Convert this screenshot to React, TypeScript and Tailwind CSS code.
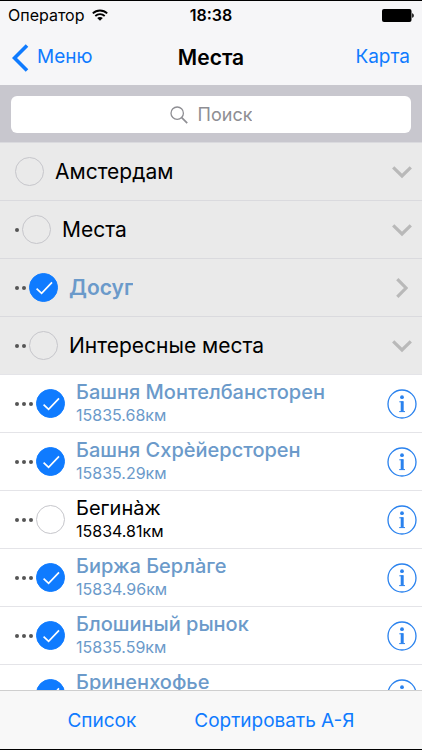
import { useState } from "react";

type Item = {
  id: string;
  title: string;
  level: number;
  checked: boolean;
};

type Group = Item & { open: boolean };
type Place = Item & { distance: string };

const GROUPS: Group[] = [
  { id: "amsterdam", title: "Амстердам", level: 0, checked: false, open: true },
  { id: "places", title: "Места", level: 1, checked: false, open: true },
  { id: "leisure", title: "Досуг", level: 2, checked: true, open: false },
  { id: "sights", title: "Интересные места", level: 2, checked: false, open: true },
];

const PLACES: Place[] = [
  { id: "montelbaan", title: "Башня Монтелбансторен", level: 3, checked: true, distance: "15835.68км" },
  { id: "schreiers", title: "Башня Схрѐйерсторен", level: 3, checked: true, distance: "15835.29км" },
  { id: "begijnhof", title: "Бегина̀ж", level: 3, checked: false, distance: "15834.81км" },
  { id: "beurs", title: "Биржа Берла̀ге", level: 3, checked: true, distance: "15834.96км" },
  { id: "flea", title: "Блошиный рынок", level: 3, checked: true, distance: "15835.59км" },
  { id: "brienen", title: "Бриненхофье", level: 3, checked: true, distance: "" },
];

function WifiIcon() {
  return (
    <svg viewBox="0 0 16 12" className="h-3 w-4" fill="none" stroke="currentColor" strokeWidth="1.8" aria-hidden="true">
      <path d="M0.8 4.4C4.8 0.5 11.2 0.5 15.2 4.4" />
      <path d="M3.3 7C6 4.5 10 4.5 12.7 7" />
      <path d="M8 11.8L5.2 9C6.8 7.6 9.2 7.6 10.8 9Z" fill="currentColor" stroke="none" />
    </svg>
  );
}

function BatteryIcon() {
  return (
    <svg viewBox="0 0 32 13" className="h-[13px] w-8" fill="currentColor" aria-hidden="true">
      <rect x="0" y="0" width="29.5" height="13" rx="2" />
      <path d="M30.2 4.2C32.3 4.9 32.3 8.1 30.2 8.8Z" />
    </svg>
  );
}

function Chevron({ open }: { open: boolean }) {
  return (
    <svg
      viewBox="0 0 20 20"
      className={`size-5 text-[#b9b9b9] ${open ? "" : "-rotate-90"}`}
      fill="none"
      stroke="currentColor"
      strokeWidth="3.2"
      aria-hidden="true"
    >
      <path d="M1.2 5.3L10 14L18.8 5.3" />
    </svg>
  );
}

function InfoIcon() {
  return (
    <svg viewBox="0 0 30 30" className="size-[30px]" fill="none" stroke="currentColor" aria-hidden="true">
      <circle cx="15" cy="15" r="14" strokeWidth="1.3" />
      <circle cx="15" cy="8.2" r="1.9" fill="currentColor" stroke="none" />
      <path d="M15.2 12.3V22.5" strokeWidth="3" />
      <path d="M12.3 12.8H16.2M12.2 22.6H18" strokeWidth="1" />
    </svg>
  );
}

function CheckRow({ item, checked, onToggle, distance }: {
  item: Item;
  checked: boolean;
  onToggle: () => void;
  distance?: string;
}) {
  const isPlace = distance !== undefined;
  const weight = isPlace ? "font-medium" : "font-semibold";

  return (
    <label className="flex min-w-0 flex-1 items-center">
      {Array.from({ length: item.level }, (_, i) => (
        <span key={i} className="mr-[3px] size-1 shrink-0 rounded-full bg-[#555]" />
      ))}
      <span className="mr-[11px] grid shrink-0 place-items-center">
        <input
          type="checkbox"
          checked={checked}
          onChange={onToggle}
          className="col-start-1 row-start-1 size-[29px] appearance-none rounded-full border border-[#c6c6cb] checked:border-[#0f7bff] checked:bg-[#0f7bff]"
        />
        {checked && (
          <svg
            viewBox="0 0 29 29"
            className="pointer-events-none col-start-1 row-start-1 size-[29px] text-white"
            fill="none"
            stroke="currentColor"
            strokeWidth="1.7"
            aria-hidden="true"
          >
            <path d="M7.6 15.6L12.6 20.4L23 9.4" />
          </svg>
        )}
      </span>
      <span className={`flex min-w-0 flex-col ${isPlace ? "pb-px" : ""} ${checked ? "text-[#6b9aca]" : "text-black"}`}>
        <span
          className={`truncate ${isPlace ? "text-[20px] leading-6" : "text-[21px] leading-7"} ${
            checked ? weight : ""
          }`}
        >
          {item.title}
        </span>
        {isPlace && <span className="h-[22px] text-[16px] leading-[22px]">{distance}</span>}
      </span>
    </label>
  );
}

export default function App() {
  const [checkedIds, setCheckedIds] = useState<string[]>(
    [...GROUPS, ...PLACES].filter((item) => item.checked).map((item) => item.id),
  );

  const toggle = (id: string) => {
    setCheckedIds((ids) => (ids.includes(id) ? ids.filter((x) => x !== id) : [...ids, id]));
  };

  return (
    <div className="flex h-screen flex-col overflow-hidden border-y border-black bg-white font-['Inter',sans-serif] text-black">
      <header className="shrink-0 bg-[#f6f6f8]">
        <div className="grid h-7 grid-cols-[1fr_auto_1fr] items-center px-2 text-[16px]">
          <div className="flex items-center gap-2">
            <span>Оператор</span>
            <WifiIcon />
          </div>
          <span className="font-semibold">18:38</span>
          <div className="flex justify-end">
            <BatteryIcon />
          </div>
        </div>
        <nav className="grid h-14 grid-cols-[1fr_auto_1fr] items-center px-3 pt-px text-[19px] text-[#0f7bff]">
          <button className="flex items-center gap-2">
            <svg viewBox="0 0 17 28" className="h-7 w-[17px]" fill="none" stroke="currentColor" strokeWidth="3.6" aria-hidden="true">
              <path d="M15 1.5L2.5 14L15 26.5" />
            </svg>
            Меню
          </button>
          <h1 className="text-[21px] font-semibold text-black">Места</h1>
          <button className="justify-self-end">Карта</button>
        </nav>
      </header>

      <div className="shrink-0 bg-[#c8c7ce] px-[11px] pt-[11px] pb-[9px]">
        <label className="flex h-[37px] items-center justify-center gap-[10px] rounded-md bg-white text-[#8e8e93]">
          <svg viewBox="0 0 18 18" className="size-[18px]" fill="none" stroke="currentColor" strokeWidth="1.3" aria-hidden="true">
            <circle cx="7.2" cy="7.2" r="6.2" />
            <path d="M11.7 11.7L17.2 17.2" strokeWidth="1.7" />
          </svg>
          <input
            type="text"
            aria-label="Поиск"
            placeholder="Поиск"
            className="[field-sizing:content] bg-transparent text-[18px] outline-none placeholder:text-[#8e8e93]"
          />
        </label>
      </div>

      <main className="min-h-0 flex-1 overflow-y-auto [scrollbar-width:none]">
        <ul>
          {GROUPS.map((group) => (
            <li key={group.id} className="flex h-[58px] items-center border-t border-[#dadade] bg-[#eaeaea] pr-[10px] pl-[15px]">
              <CheckRow item={group} checked={checkedIds.includes(group.id)} onToggle={() => toggle(group.id)} />
              <button aria-label={group.title}>
                <Chevron open={group.open} />
              </button>
            </li>
          ))}
          {PLACES.map((place) => (
            <li key={place.id} className="flex h-[58px] items-center border-t border-[#e4e4e8] pr-[5px] pl-[15px]">
              <CheckRow
                item={place}
                checked={checkedIds.includes(place.id)}
                onToggle={() => toggle(place.id)}
                distance={place.distance}
              />
              <button aria-label={place.title} className="text-[#2a82ee]">
                <InfoIcon />
              </button>
            </li>
          ))}
        </ul>
      </main>

      <footer className="flex h-[59px] shrink-0 items-center justify-center gap-[58px] border-t border-[#cfcfcf] bg-[#f8f8f8] pt-0.5 text-[19px] text-[#0f7bff]">
        <button>Список</button>
        <button>Сортировать А-Я</button>
      </footer>
    </div>
  );
}
